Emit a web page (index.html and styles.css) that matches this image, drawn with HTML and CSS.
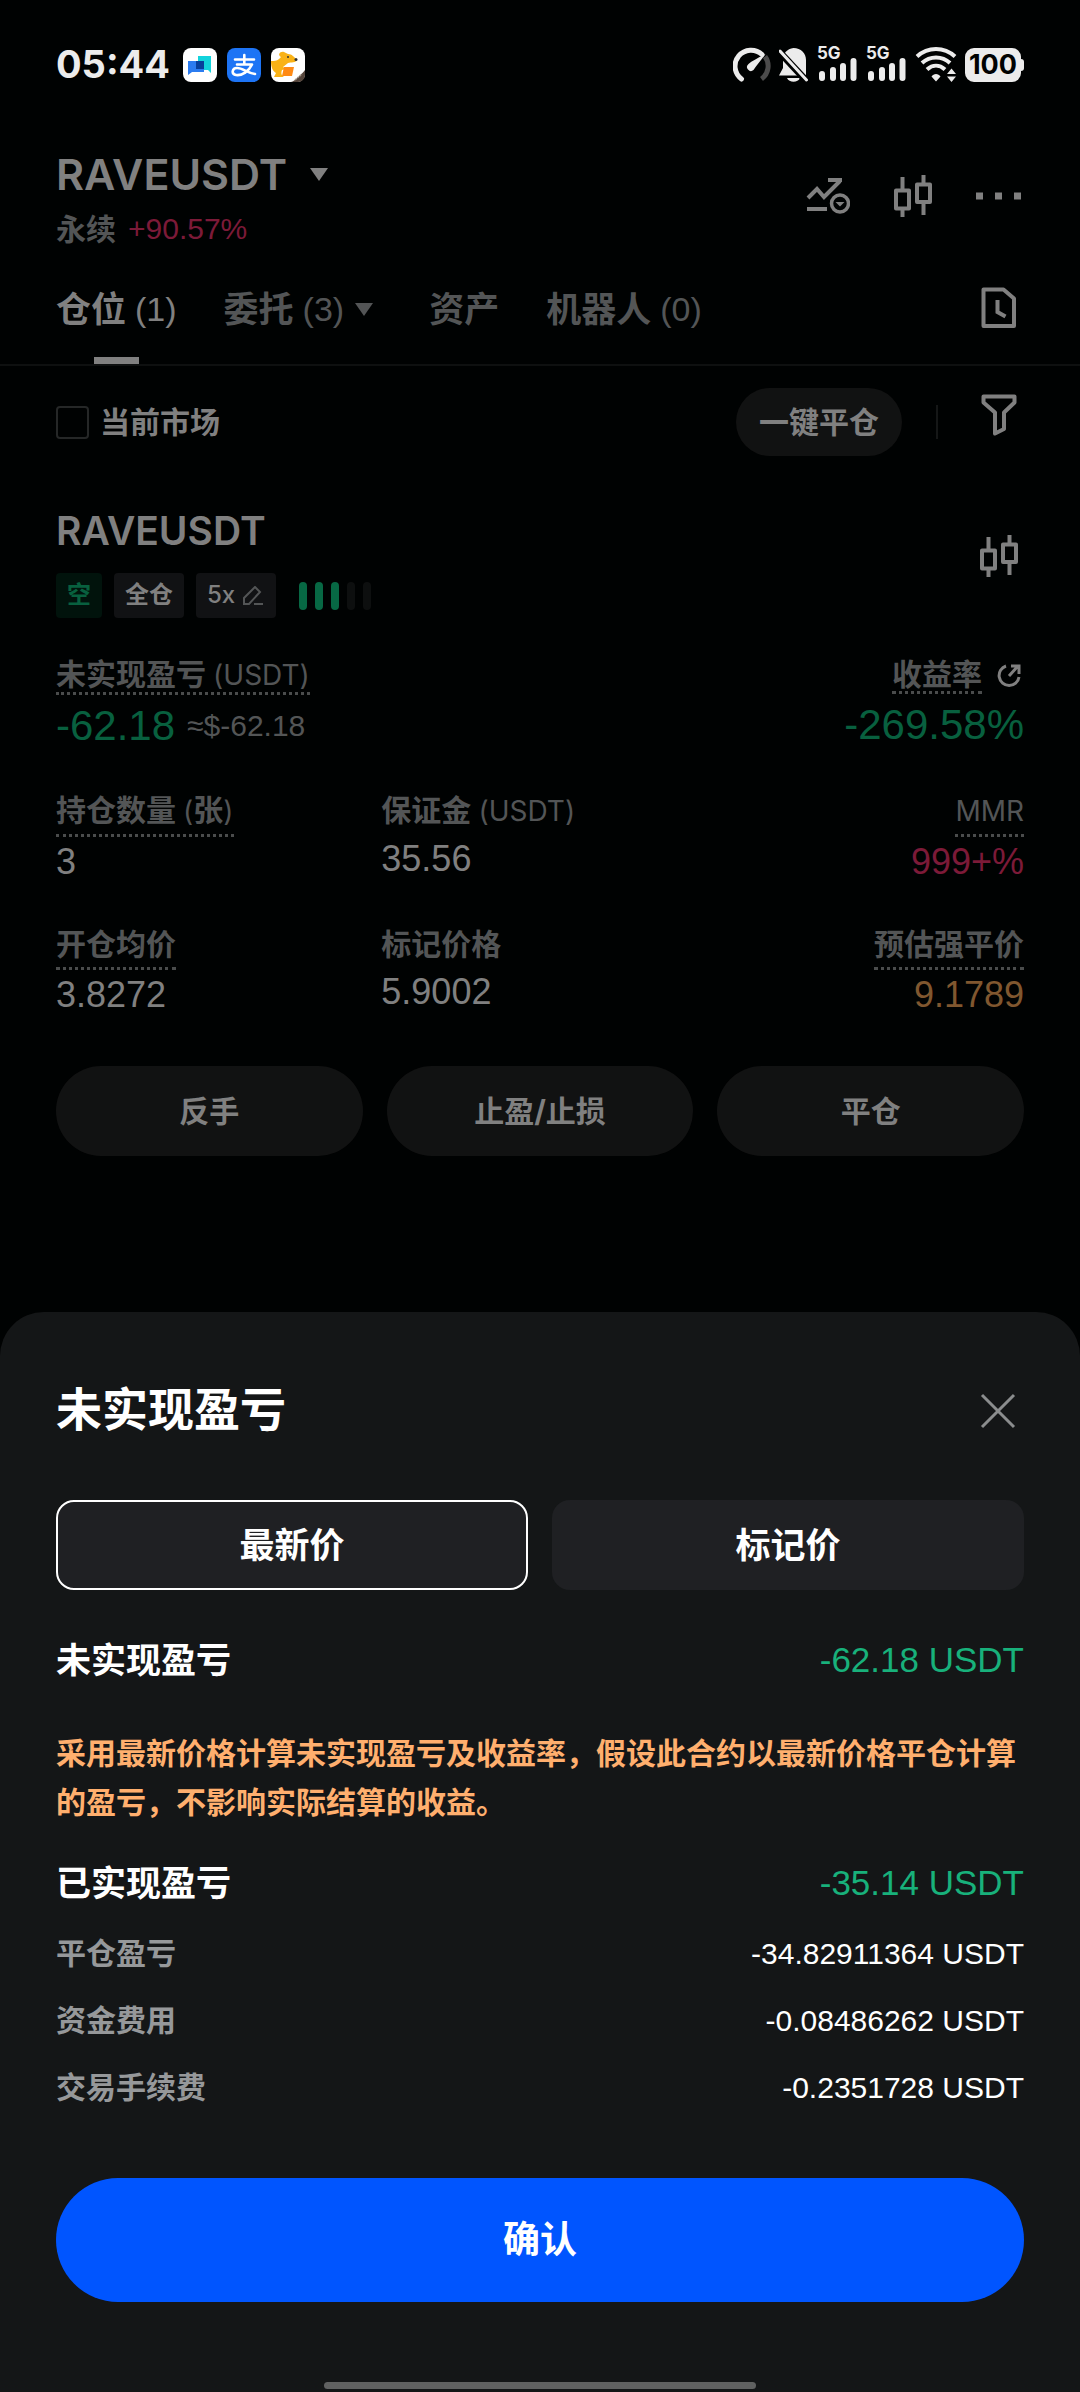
FILE: index.html
```html
<!DOCTYPE html>
<html lang="zh-CN">
<head>
<meta charset="utf-8">
<meta name="viewport" content="width=device-width, initial-scale=1">
<title>未实现盈亏</title>
<link rel="stylesheet" href="styles.css">
</head>
<body>
<svg class="defs" aria-hidden="true">
  <symbol id="candles" viewBox="0 0 40 42">
    <path d="M9.500 2v12M9.500 34v8M30.500 0v8M30.500 28v12" fill="none" stroke="currentColor" stroke-width="4"/>
    <path d="M3 15.500h13v18H3zM24 9.500h13v17.500H24z" fill="none" stroke="currentColor" stroke-width="4" stroke-linejoin="round"/>
  </symbol>
  <symbol id="signal" viewBox="0 0 41 36">
    <path d="M5 27v4M16 23v8M26 19v12M36.500 14v17" fill="none" stroke="#ececec" stroke-width="6" stroke-linecap="round"/>
  </symbol>
</svg>
<div class="screen">
  <div class="status">
    <span class="time">05:44</span>
    <div class="apps">
      <svg viewBox="0 0 34 34" width="34" height="34"><rect width="34" height="34" rx="8" fill="#fff"/><path d="M15 8h13v17l-3-3H15z" fill="#12d3dc"/><path d="M5 13h16v11H9l-4 3z" fill="#2b7cf0"/><path d="M13 13h8v8h-8z" fill="#07409b"/></svg>
      <svg viewBox="0 0 34 34" width="34" height="34"><rect width="34" height="34" rx="8" fill="#1d74f5"/><path d="M8 11.500h19M17.300 7v9M10 16.500h15C22 23 15 28 9 27c-5-1-4-7 1-7 6 0 10 5 18 6" fill="none" stroke="#fff" stroke-width="2.600" stroke-linecap="round" stroke-linejoin="round"/></svg>
      <svg viewBox="0 0 34 34" width="34" height="34"><rect width="34" height="34" rx="8" fill="#fff"/><path d="M0 13c4 0 7 0 10-4C6 7 9 3 13 4l4 2c4 0 6 3 9 6-1 3-6 2-9 3l-5 4 3 2-4 1c-1 3-1 5 2 7H3l2-4c-3-2-5-5-5-12z" fill="#f9b216"/><path d="M13 19h10l-2 9H11z" fill="#ff8a14"/><circle cx="17" cy="9" r="1" fill="#333"/><circle cx="25" cy="11.500" r="1.500" fill="#333"/><path d="M20 34c4-1 10-7 14-12v5a7 7 0 0 1-7 7z" fill="#54443a"/><path d="M24 32l7-6" stroke="#a3968a" stroke-width="1.500" stroke-dasharray="2 1"/></svg>
    </div>
    <div class="system">
      <svg viewBox="0 0 38 36" width="38" height="36"><path d="M32 9.500A16 16 0 0 1 28.500 32" fill="none" stroke="#4b4b4b" stroke-width="5"/><path d="M8.500 32A16 16 0 1 1 29 7.500" fill="none" stroke="#ececec" stroke-width="5" stroke-linecap="round"/><path d="M32.500 7C25 11 19 14 15.500 17a3.800 3.800 0 0 0 5 6C24 18 29 12 32.500 7z" fill="#ececec"/></svg>
      <svg viewBox="0 0 30 36" width="30" height="36"><path d="M14.500 1C8 2 4 6 4 13v8l-4 7.500h27V13C27 6 22 1 14.500 1z" fill="#ececec"/><path d="M8 31h13c-2 5-11 5-13 0z" fill="#ececec"/><path d="M0 4.500l29 31" stroke="#000202" stroke-width="7"/><path d="M1 4l26.500 29" stroke="#ececec" stroke-width="3" stroke-linecap="round"/></svg>
      <span class="cell"><svg viewBox="0 0 41 36" width="41" height="36"><use href="#signal"/></svg><span class="net">5G</span></span>
      <span class="cell"><svg viewBox="0 0 41 36" width="41" height="36"><use href="#signal"/></svg><span class="net">5G</span></span>
      <svg viewBox="0 0 42 36" width="42" height="36"><g fill="none" stroke="#ececec" stroke-width="4"><path d="M2 9.500c11-10 27-10 38 0M7 16c8-7.500 20-7.500 28 0M12 22.500c5.500-5 12.500-5 18 0"/></g><path d="M21 34.500l-4.500-5c2-3.500 7-3.500 9 0zM32 27h9l-4.500-5.500zM32 29.500h9L36.500 35z" fill="#ececec"/></svg>
      <span class="battery">100</span>
    </div>
  </div>

  <main class="page">
    <header class="pair">
      <div>
        <button class="pair-name">RAVEUSDT<i class="caret"></i></button>
        <div class="pair-sub"><b>永续</b><span class="red">+90.57%</span></div>
      </div>
      <div class="pair-actions">
        <button aria-label="图表设置"><svg viewBox="0 0 44 38" width="44" height="38" fill="none" stroke="currentColor"><path d="M2 21l9-9 7 8L34 4M22 3h14M1 32h20" stroke-width="4"/><circle cx="34" cy="26.500" r="8.500" stroke-width="3.500"/><path d="M29.500 25h9L34 29.500z" fill="currentColor" stroke="none"/></svg></button>
        <button aria-label="K线"><svg width="40" height="42"><use href="#candles"/></svg></button>
        <button aria-label="更多"><svg viewBox="0 0 48 8" width="48" height="8" fill="currentColor"><path d="M0 .500h7v7H0zM19 .500h7v7h-7zM38 .500h7v7h-7z"/></svg></button>
      </div>
    </header>

    <nav class="tabs">
      <button class="tab active">仓位<span>(1)</span></button>
      <button class="tab">委托<span>(3)</span><i class="caret"></i></button>
      <button class="tab">资产</button>
      <button class="tab">机器人<span>(0)</span></button>
      <button class="history" aria-label="历史"><svg viewBox="0 0 36 42" width="36" height="42" fill="none" stroke="currentColor" stroke-width="4"><path d="M2.500 2.500h20l10.500 9v27.500H2.500z" stroke-linejoin="round"/><path d="M16.500 13v12l8 4.500"/></svg></button>
    </nav>

    <div class="toolbar">
      <label class="check"><input type="checkbox">当前市场</label>
      <button class="pill close-all">一键平仓</button>
      <i class="divider"></i>
      <button class="filter" aria-label="筛选"><svg viewBox="0 0 36 54" width="36" height="54" fill="none" stroke="currentColor" stroke-width="4" stroke-linejoin="round"><path d="M2.500 8.500h31v6L23 24.500V41l-9 4.500V24.500l-11.500-10z"/></svg></button>
    </div>

    <section class="position">
      <div class="position-head">
        <div>
          <h2>RAVEUSDT</h2>
          <div class="tags">
            <span class="tag short">空</span>
            <span class="tag">全仓</span>
            <button class="tag leverage">5x<svg viewBox="0 0 20 20" width="20" height="20" fill="none" stroke="currentColor" stroke-width="2"><path d="M1 18v-6L12 1l5 5L6 18zM11 18h9"/></svg></button>
            <span class="risk"><i class="on"></i><i class="on"></i><i class="on"></i><i></i><i></i></span>
          </div>
        </div>
        <button class="chart" aria-label="K线"><svg width="40" height="42"><use href="#candles"/></svg></button>
      </div>

      <div class="pnl">
        <div>
          <div class="label hint">未实现盈亏 <span>(USDT)</span></div>
          <div class="big">-62.18<small>≈$-62.18</small></div>
        </div>
        <div class="end">
          <div class="share"><div class="label hint">收益率</div><svg viewBox="0 0 24 24" width="24" height="24" fill="none" stroke="currentColor" stroke-width="3"><path d="M9 2A10 10 0 1 0 22 13M12 12L21 2M14 2h8v8"/></svg></div>
          <div class="big">-269.58%</div>
        </div>
      </div>

      <div class="metrics">
        <div><div class="label hint">持仓数量 <span>(</span>张<span>)</span></div><div class="value">3</div></div>
        <div><div class="label">保证金 <span>(USDT)</span></div><div class="value">35.56</div></div>
        <div class="end"><div class="label hint"><span>MMR</span></div><div class="value red">999+%</div></div>
        <div><div class="label hint">开仓均价</div><div class="value">3.8272</div></div>
        <div><div class="label">标记价格</div><div class="value">5.9002</div></div>
        <div class="end"><div class="label hint">预估强平价</div><div class="value amber">9.1789</div></div>
      </div>

      <div class="actions">
        <button class="pill">反手</button>
        <button class="pill">止盈/止损</button>
        <button class="pill">平仓</button>
      </div>
    </section>
  </main>

  <section class="sheet" role="dialog" aria-labelledby="sheet-title">
    <div class="sheet-head">
      <h1 id="sheet-title">未实现盈亏</h1>
      <button class="close" aria-label="关闭"><svg viewBox="0 0 36 36" width="36" height="36" stroke="currentColor" stroke-width="3"><path d="M2 2l32 32M34 2L2 34"/></svg></button>
    </div>
    <div class="segments">
      <button class="segment selected">最新价</button>
      <button class="segment">标记价</button>
    </div>
    <div class="total"><b>未实现盈亏</b><span>-62.18 USDT</span></div>
    <p class="note">采用最新价格计算未实现盈亏及收益率，假设此合约以最新价格平仓计算的盈亏，不影响实际结算的收益。</p>
    <div class="total realized"><b>已实现盈亏</b><span>-35.14 USDT</span></div>
    <dl class="details">
      <div><dt>平仓盈亏</dt><dd>-34.82911364 USDT</dd></div>
      <div><dt>资金费用</dt><dd>-0.08486262 USDT</dd></div>
      <div><dt>交易手续费</dt><dd>-0.2351728 USDT</dd></div>
    </dl>
    <button class="confirm">确认</button>
    <div class="home"></div>
  </section>
</div>
</body>
</html>
```
FILE: styles.css
```css
:root {
  --bg: #000202;
  --text: #808080;
  --muted: #535556;
  --green: #08603f;
  --red: #7c1a38;
  --amber: #80572f;
  --fill: #111212;
  --numeric: "Liberation Sans", "Noto Sans CJK SC", sans-serif;
}

* { box-sizing: border-box; }

body {
  margin: 0;
  background: var(--bg);
  color: var(--text);
  font-family: Inter, "Noto Sans CJK SC", sans-serif;
  font-weight: 500;
  line-height: 1.2;
}

h1, h2, p, dl, dd { margin: 0; }

button {
  padding: 0;
  border: 0;
  background: none;
  color: inherit;
  font: inherit;
}

svg { display: block; flex: none; }

.defs { position: absolute; width: 0; height: 0; }

.screen {
  display: flex;
  flex-direction: column;
  min-height: 100vh;
}

/* status bar */
.status {
  display: flex;
  align-items: center;
  height: 130px;
  padding: 0 56px;
}

.time {
  color: #ececec;
  font-size: 38px;
  font-weight: 700;
}

.apps { display: flex; gap: 10px; margin-left: 13px; }

.system { display: flex; align-items: center; gap: 8px; margin-left: auto; }

.cell { position: relative; }

.net {
  position: absolute;
  top: 0;
  left: 0;
  color: #ececec;
  font-size: 17px;
  font-weight: 700;
  line-height: 12px;
}

.battery {
  position: relative;
  width: 56px;
  margin-right: 3px;
  border-radius: 9px;
  background: #ececec;
  color: #000202;
  font-size: 27px;
  font-weight: 700;
  line-height: 34px;
  text-align: center;
}

.battery::after {
  content: "";
  position: absolute;
  top: 11px;
  right: -3px;
  width: 3px;
  height: 12px;
  border-radius: 0 3px 3px 0;
  background: #ececec;
}

/* numbers */
.pair-sub span,
.tab span,
.big,
.value,
.total span,
.details dd { font-family: var(--numeric); }

/* trading pair */
.pair {
  display: flex;
  align-items: flex-start;
  justify-content: space-between;
  padding: 16px 56px 0;
}

.pair-name {
  display: flex;
  align-items: center;
  gap: 23px;
  font-size: 43px;
  font-weight: 600;
  line-height: 56px;
}

.caret {
  border: 9px solid transparent;
  border-top: 13px solid currentColor;
  border-bottom: 0;
}

.pair-sub {
  display: flex;
  gap: 12px;
  margin-top: 7px;
  color: var(--muted);
  font-size: 30px;
  line-height: 40px;
}

.pair-sub span { font-weight: 400; }

.pair-actions { display: flex; align-items: center; gap: 43px; height: 100px; }

.red { color: var(--red); }
.amber { color: var(--amber); }

/* tabs */
.tabs {
  display: flex;
  align-items: flex-start;
  gap: 47px;
  margin-top: 12px;
  padding: 0 56px;
  border-bottom: 2px solid #0e1010;
}

.tab {
  display: flex;
  align-items: center;
  height: 103px;
  padding-bottom: 7px;
  color: var(--muted);
  font-size: 35px;
  font-weight: 700;
}

.tab span { margin-left: 9px; font-size: 34px; font-weight: 500; }
.tab .caret { margin: 0 9px 0 11px; }

.tab.active {
  color: var(--text);
  background: linear-gradient(var(--text), var(--text)) center bottom / 45px 7px no-repeat;
}

.history { margin: 26px 7px 0 auto; }

/* toolbar */
.toolbar {
  display: flex;
  align-items: center;
  padding: 22px 56px 0;
}

.check {
  display: flex;
  align-items: center;
  gap: 11px;
  font-size: 30px;
  font-weight: 700;
}

.check input {
  appearance: none;
  width: 33px;
  height: 33px;
  margin: 0;
  border: 2px solid #252727;
  border-radius: 4px;
}

.pill {
  border-radius: 45px;
  background: var(--fill);
  font-size: 30px;
  font-weight: 700;
}

.close-all { height: 68px; margin-left: auto; padding: 0 23px; }

.divider { width: 2px; height: 34px; margin: 0 43px 0 34px; background: #151717; }

.filter { align-self: flex-start; margin-right: 7px; }

/* open position */
.position { padding: 50px 56px 0; }

.position-head { display: flex; align-items: flex-start; justify-content: space-between; }

.position h2 {
  font-size: 39px;
  font-weight: 600;
  line-height: 50px;
}

.tags { display: flex; align-items: center; gap: 12px; margin-top: 17px; }

.tag {
  display: flex;
  align-items: center;
  height: 45px;
  padding: 0 11px;
  border-radius: 4px;
  background: #111214;
  font-size: 24px;
  font-weight: 700;
}

.tag.short { background: #01130c; color: #08603f; }

.leverage { gap: 8px; padding-right: 13px; font-weight: 500; }
.leverage svg { color: var(--muted); }

.risk { display: flex; gap: 8px; margin-left: 11px; }
.risk i { width: 8px; height: 28px; border-radius: 4px; background: #0d0f0f; }
.risk .on { background: #076844; }

.chart { display: flex; align-items: center; height: 100px; margin-right: 5px; }

.label {
  width: fit-content;
  color: var(--muted);
  font-size: 30px;
  font-weight: 700;
  line-height: 46px;
}

.label span { font-size: 28px; font-weight: 400; }

.hint { border-bottom: 3px dotted #4a4c4c; }

.pnl { display: flex; justify-content: space-between; margin-top: 39px; }
.pnl .label { line-height: 34px; }

.end { display: flex; flex-direction: column; align-items: flex-end; }

.share { display: flex; align-items: center; gap: 15px; margin-right: 3px; }

.big {
  display: flex;
  align-items: center;
  gap: 12px;
  margin-top: 8px;
  color: var(--green);
  font-size: 42px;
  line-height: 46px;
}

.big small {
  color: var(--muted);
  font-size: 30px;
  font-weight: 400;
}

.metrics {
  display: grid;
  grid-template-columns: repeat(3, 1fr);
  gap: 41px 8px;
  margin-top: 38px;
}

.value {
  margin-top: 7px;
  font-size: 36px;
  line-height: 36px;
}

.actions {
  display: grid;
  grid-template-columns: repeat(3, 1fr);
  gap: 24px;
  margin-top: 53px;
}

.actions .pill { height: 90px; }

/* bottom sheet */
.sheet {
  margin-top: auto;
  padding: 65px 56px 3px;
  border-radius: 44px 44px 0 0;
  background: #141617;
  color: #fff;
}

.sheet-head { display: flex; align-items: flex-end; justify-content: space-between; }

.sheet h1 { font-size: 46px; font-weight: 700; line-height: 64px; }

.close { margin: 0 8px 12px 0; color: #8b8d8e; }

.segments {
  display: grid;
  grid-template-columns: 1fr 1fr;
  gap: 24px;
  margin-top: 59px;
}

.segment {
  height: 90px;
  border: 2px solid transparent;
  border-radius: 18px;
  background: #1f2023 border-box;
  font-size: 35px;
  font-weight: 700;
}

.selected { border-color: #fff; }

.total {
  display: flex;
  justify-content: space-between;
  margin-top: 45px;
  font-size: 35px;
  line-height: 50px;
}

.total span { color: #18b17b; }

.realized { margin-top: 31px; }

.note {
  margin-top: 44px;
  color: #ffaf6e;
  font-size: 30px;
  font-weight: 700;
  line-height: 49px;
}

.details { margin-top: 12px; font-size: 30px; line-height: 67px; }
.details div { display: flex; justify-content: space-between; }
.details dt { color: #96989a; font-weight: 700; }

.confirm {
  display: block;
  width: 100%;
  height: 124px;
  margin-top: 57px;
  border-radius: 62px;
  background: #0055ff;
  font-size: 37px;
  font-weight: 700;
}

.home {
  width: 432px;
  height: 7px;
  margin: 80px auto 0;
  border-radius: 4px;
  background: #606161;
}
```
